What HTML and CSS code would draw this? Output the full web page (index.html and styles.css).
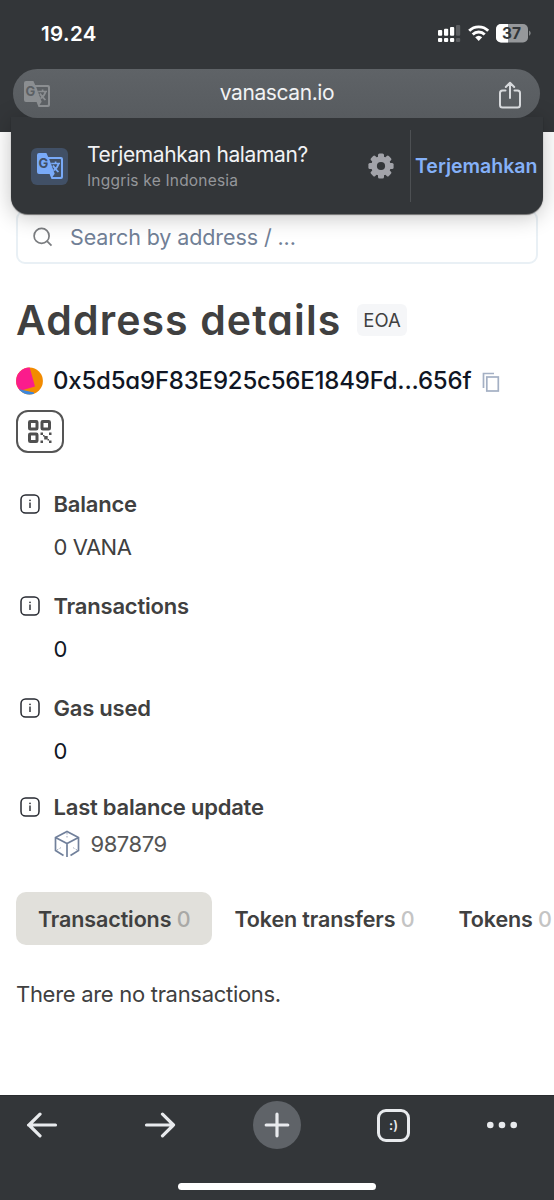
FILE: index.html
```html
<!DOCTYPE html>
<html lang="id">
<head>
<meta charset="utf-8">
<meta name="viewport" content="width=device-width, initial-scale=1">
<title>Address details</title>
<link rel="stylesheet" href="styles.css">
</head>
<body>
<svg class="defs" aria-hidden="true">
  <symbol id="translate" viewBox="0 0 26 26">
    <path d="M2 0H9.4L11.2 4H24A2 2 0 0 1 26 6V24A2 2 0 0 1 24 26H14.5L12.6 21H2A2 2 0 0 1 0 19V2A2 2 0 0 1 2 0Z" fill="currentColor"/>
    <path class="translate-sheet" d="M12.2 6H23.2A.8.8 0 0 1 24 6.800V23.200A.8.8 0 0 1 23.200 24H15.500L17.700 20.800Z"/>
    <path d="M14.200 10.500H23M18.600 8.600V10.500M21.600 10.500C20.800 14 18.500 16.200 16.500 17.600M16 12.500C17.500 15.500 19.500 17 21.500 19" fill="none" stroke="currentColor" stroke-width="1.700"/>
    <text class="translate-g" x="1.400" y="15.400">G</text>
  </symbol>
  <symbol id="info" viewBox="0 0 20 20">
    <rect x="1" y="1" width="18" height="18" rx="4.600" fill="none" stroke="#262930" stroke-width="1.500"/>
    <path d="M10 8.500V14" stroke="#262930" stroke-width="1.400"/><circle cx="10" cy="6.300" r=".85" fill="#262930"/>
  </symbol>
</svg>
<div class="phone">
  <header class="browser-top">
    <div class="status">
      <span class="clock">19.24</span>
      <svg class="status-icons" width="94" height="20" viewBox="0 0 94 20">
        <g fill="#fff"><rect x="0" y="6" width="4.200" height="5.800" rx="1"/><rect x="6" y="4.800" width="4.200" height="7" rx="1"/><rect x="12" y="3" width="4.200" height="8.800" rx="1"/><rect x="0" y="14" width="4.200" height="4" rx="1"/><rect x="6" y="14" width="4.200" height="4" rx="1"/><rect x="12" y="14" width="4.200" height="4" rx="1"/></g>
        <g fill="#5c5e61"><rect x="18" y="1" width="4.200" height="10.800" rx="1"/><rect x="18" y="14" width="4.200" height="4" rx="1"/></g>
        <g fill="none" stroke="#fff" stroke-width="2.900"><path d="M31.200 6.700A13.600 13.600 0 0 1 50.200 6.700"/><path d="M34.700 10.500A8.600 8.600 0 0 1 46.700 10.500"/></g>
        <path d="M37.200 13.300Q40.700 10.200 44.200 13.300L40.700 17Z" fill="#fff"/>
        <rect x="58" y="0" width="32" height="18.500" rx="5" fill="#96989b"/>
        <path d="M63 0H70V18.500H63A5 5 0 0 1 58 13.500V5A5 5 0 0 1 63 0Z" fill="#fff"/>
        <path d="M91.200 6.500Q94 9.200 91.200 12Z" fill="#96989b"/>
        <text class="battery" x="64" y="14.800">37</text>
      </svg>
    </div>
    <div class="urlbar">
      <svg class="url-translate" width="26" height="26"><use href="#translate"/></svg>
      <span class="url">vanascan.io</span>
      <svg class="share" width="24" height="28" viewBox="0 0 24 28" fill="none" stroke="#d7d9dc" stroke-width="2" stroke-linecap="round" stroke-linejoin="round"><path d="M7.500 9.500H4.500A2.500 2.500 0 0 0 2 12V24A2.500 2.500 0 0 0 4.500 26.500H19.500A2.500 2.500 0 0 0 22 24V12A2.500 2.500 0 0 0 19.500 9.500H16.500M12 17V1.800M7.800 6L12 1.800L16.200 6"/></svg>
    </div>
    <aside class="banner">
      <span class="banner-icon"><svg width="26" height="26"><use href="#translate"/></svg></span>
      <div class="banner-copy"><span class="banner-title">Terjemahkan halaman?</span><span class="banner-sub">Inggris ke Indonesia</span></div>
      <svg class="gear" width="26" height="26" viewBox="-13 -13 26 26"><g fill="#a2a3a9"><g id="teeth"><rect x="-3" y="-12.600" width="6" height="25.200" rx="1.500"/><rect x="-12.600" y="-3" width="25.200" height="6" rx="1.500"/></g><use href="#teeth" transform="rotate(45)"/><circle r="9.800"/></g><circle r="4.100" fill="#333639"/></svg>
      <span class="banner-action">Terjemahkan</span>
    </aside>
  </header>
  <main class="content">
    <div class="search">
      <svg width="20" height="20" viewBox="0 0 20 20" fill="none" stroke="#7b7d80" stroke-width="1.700"><circle cx="8.600" cy="8.900" r="7.500"/><path d="M14 14.200L18.500 18.700"/></svg>
      <span class="search-text">Search by address / ...</span>
    </div>
    <div class="title-row"><h1 class="title">Address details</h1><span class="tag">EOA</span></div>
    <div class="address-row">
      <svg width="28" height="28" viewBox="0 0 28 28"><defs><clipPath id="disc"><circle cx="13.500" cy="14" r="13.400"/></clipPath></defs><g clip-path="url(#disc)"><path d="M0 0H28V28H0Z" fill="#f28b00"/><path d="M0 0H13.500L19 19.500L0 25Z" fill="#fb1c8c"/><path d="M0 21.500L18 25.500V28H0Z" fill="#3d87dc"/></g></svg>
      <span class="address">0x5d5a9F83E925c56E1849Fd...656f</span>
      <svg class="copy" width="18" height="21" viewBox="0 0 18 21" fill="none" stroke="#a4b0c4" stroke-width="1.700"><path d="M12 1.500H1.500V16"/><rect x="4.800" y="5" width="11.500" height="14"/></svg>
    </div>
    <button class="qr" aria-label="QR"><svg width="26" height="26" viewBox="0 0 26 26"><g fill="none" stroke="#505050" stroke-width="3"><rect x="2.500" y="2.500" width="7.500" height="7.500" rx=".8"/><rect x="15" y="2.500" width="7.500" height="7.500" rx=".8"/><rect x="2.500" y="15" width="7.500" height="7.500" rx=".8"/></g><g fill="#505050"><path d="M13.500 13.500h2.500v2.500h-2.500zM22 13.500h2.500v2.500h-2.500zM17.200 17h3.500v3.500h-3.500zM13.500 21.500h2.500v2.500h-2.500zM22 21.500h2.500v2.500h-2.500z"/><path d="M16 16h1.500v1.500h-1.500zM20.500 20h1.500v1.500h-1.500z"/></g></svg></button>
    <dl class="details">
      <dt><svg width="20" height="20"><use href="#info"/></svg><span>Balance</span></dt><dd class="muted">0 VANA</dd>
      <dt><svg width="20" height="20"><use href="#info"/></svg><span>Transactions</span></dt><dd>0</dd>
      <dt><svg width="20" height="20"><use href="#info"/></svg><span>Gas used</span></dt><dd>0</dd>
      <dt class="last"><svg width="20" height="20"><use href="#info"/></svg><span>Last balance update</span></dt>
      <dd class="block"><svg width="26" height="28" viewBox="0 0 26 28" fill="none" stroke="#71809b" stroke-width="1.700"><path d="M9.500 25.500L1.500 20.500V7.500L13 1.500L24.500 7.500V20.500L16.500 25.500M1.500 7.500L13 13.500L24.500 7.500M13 13.500V27"/><path d="M13 3V8M3 20L8 17M23 20L18 17" stroke-width=".7" stroke-dasharray="1.500 1.500"/></svg><span>987879</span></dd>
    </dl>
    <nav class="tabs"><span class="tab active"><span>Transactions</span> <i>0</i></span><span class="tab"><span>Token transfers</span> <i>0</i></span><span class="tab"><span>Tokens</span> <i>0</i></span></nav>
    <p class="empty">There are no transactions.</p>
  </main>
  <footer class="toolbar">
    <div class="tools">
      <svg width="32" height="26" viewBox="0 0 32 26"><path d="M29.500 13H2.500M14 2.200L3 13L14 23.800"/></svg>
      <svg width="32" height="26" viewBox="0 0 32 26"><path d="M2.500 13H29.500M18.500 2.200L29.500 13L18.500 23.800"/></svg>
      <span class="new-tab"><svg width="26" height="26" viewBox="0 0 26 26"><path d="M13 2.200V23.800M2.200 13H23.800"/></svg></span>
      <span class="tab-count">:)</span>
      <svg width="32" height="8" viewBox="0 0 32 8"><g fill="#e8eaed"><circle cx="4.300" cy="4" r="3.300"/><circle cx="16" cy="4" r="3.300"/><circle cx="27.700" cy="4" r="3.300"/></g></svg>
    </div>
    <div class="home"></div>
  </footer>
</div>
</body>
</html>
```
FILE: styles.css
```css
* { box-sizing: border-box; }
body { margin: 0; background: #fff; font-family: Inter, "Liberation Sans", sans-serif; color: #404040; }
svg { display: block; flex: none; }
.defs { display: none; }
.phone { height: 1200px; display: flex; flex-direction: column; overflow: hidden; }
.browser-top { position: relative; z-index: 1; height: 132px; flex: none; background: #333639; }
.status { height: 69px; display: flex; justify-content: space-between; align-items: center; padding: 0 22px 2px 41px; }
.clock { color: #fff; font-size: 20.5px; font-weight: 600; letter-spacing: .4px; }
.battery { font: 700 15.500px Inter, sans-serif; fill: #333639; }
.urlbar { position: relative; z-index: 2; margin: 0 14px 0 13px; height: 49px; border-radius: 25px; background: linear-gradient(#5f6367, #575b5f); display: flex; align-items: center; justify-content: space-between; padding: 0 18px 0 11px; }
.url-translate { color: #8b8e91; --icon-back: #5c6064; }
.url { color: #f1f2f4; font-size: 21px; line-height: 26px; padding: 0 0 1px 6px; letter-spacing: -.4px; }
.share { margin-top: 3px; }
.translate-sheet { fill: var(--icon-back); }
.translate-g { font: 700 13px Inter, sans-serif; fill: var(--icon-back); }
.banner { position: absolute; top: 117px; left: 11px; width: 532px; height: 97px; border-radius: 0 0 17px 17px; background: #333639; box-shadow: 0 3px 22px rgba(0,0,0,.24), 0 1px 1px rgba(0,0,0,.5); display: flex; align-items: center; padding: 1px 5px 0 20px; }
.banner-icon { width: 37px; height: 37px; flex: none; border-radius: 6px; background: #415066; color: #79aaf8; --icon-back: #415066; display: grid; place-items: center; }
.banner-copy { width: 299px; flex: none; padding: 2px 0 0 19px; display: flex; flex-direction: column; white-space: nowrap; }
.banner-title { color: #f1f2f4; font-size: 21px; line-height: 28px; letter-spacing: -.38px; }
.banner-sub { color: #95979b; font-size: 15.500px; line-height: 24px; letter-spacing: .2px; }
.gear { margin-left: 1px; }
.banner-action { margin-left: 16px; padding-left: 4px; height: 72px; border-left: 1px solid #4d5053; color: #85b1f8; font-size: 19.500px; font-weight: 600; line-height: 73px; white-space: nowrap; }
.content { flex: 1; padding: 78px 0 0 16px; min-height: 0; overflow: hidden; }
.search { height: 54px; margin-right: 16px; border: 2px solid #e9f0f5; border-radius: 9px; display: flex; align-items: center; padding: 0 0 0 15px; gap: 17px; color: #718096; font-size: 21.500px; letter-spacing: -.1px; }
.title-row { height: 60px; margin-top: 26px; display: flex; align-items: center; gap: 16px; }
.title { margin: 0; font-size: 41px; font-weight: 580; white-space: nowrap; font-feature-settings: "cv11"; letter-spacing: 1.100px; line-height: 60px; }
.tag { background: #f5f6f8; border-radius: 6px; height: 32px; padding: 0 6px; font-size: 18.500px; line-height: 32px; }
.address-row { height: 30px; margin-top: 16px; display: flex; align-items: center; }
.address { margin-left: 9px; color: #101624; font-size: 24px; font-weight: 500; line-height: 30px; white-space: nowrap; font-feature-settings: "cv11"; letter-spacing: -.2px; }
.copy { margin: 2px 0 0 11px; }
.qr { display: grid; place-items: center; width: 48px; height: 43px; margin-top: 14px; border: 2px solid #555; border-radius: 12px; padding: 0; background: #fff; }
.details { margin: 29px 0 0 3.500px; font-size: 22px; letter-spacing: -.22px; }
.details dt { height: 43px; display: flex; align-items: center; gap: 14px; font-weight: 600; }
.details dd { margin: 0 0 16px 34px; height: 43px; line-height: 44px; color: #101624; letter-spacing: -.45px; }
.details .muted { color: #404040; }
.details .last { height: 38px; }
.details .block { height: 36px; display: flex; align-items: center; gap: 11px; color: #555; margin-bottom: 0; }
.tabs { height: 53px; margin-top: 30px; display: flex; white-space: nowrap; }
.tab { flex: none; padding: 0 22px; font-size: 21.500px; font-weight: 600; line-height: 54px; letter-spacing: -.12px; }
.tab i { font-style: normal; font-weight: 500; color: #c4c4c4; }
.tab:last-child { padding-right: 0; }
.active { background: #e1e0db; border-radius: 10px; }
.active i { color: #a9a9a6; }
.empty { margin: 35px 0 0; font-size: 22px; line-height: 28px; letter-spacing: -.3px; }
.toolbar { height: 105px; flex: none; background: #333639; padding-top: 5px; border-top: 1px solid #292c2f; }
.tools { height: 48px; display: grid; grid-template-columns: 84px 151px 84px 149px 67px; align-items: center; justify-items: center; }
.tools path { fill: none; stroke: #e8eaed; stroke-width: 3.200; stroke-linecap: round; stroke-linejoin: round; }
.new-tab { width: 48px; height: 48px; border-radius: 50%; background: #5f6368; display: grid; place-items: center; }
.tab-count { width: 33px; height: 33px; border: 3px solid #e8eaed; border-radius: 9px; color: #e8eaed; font-size: 13px; font-weight: 600; line-height: 27px; text-align: center; }
.home { width: 198px; height: 7px; border-radius: 4px; background: #fff; margin: 34px auto 0; }
```
